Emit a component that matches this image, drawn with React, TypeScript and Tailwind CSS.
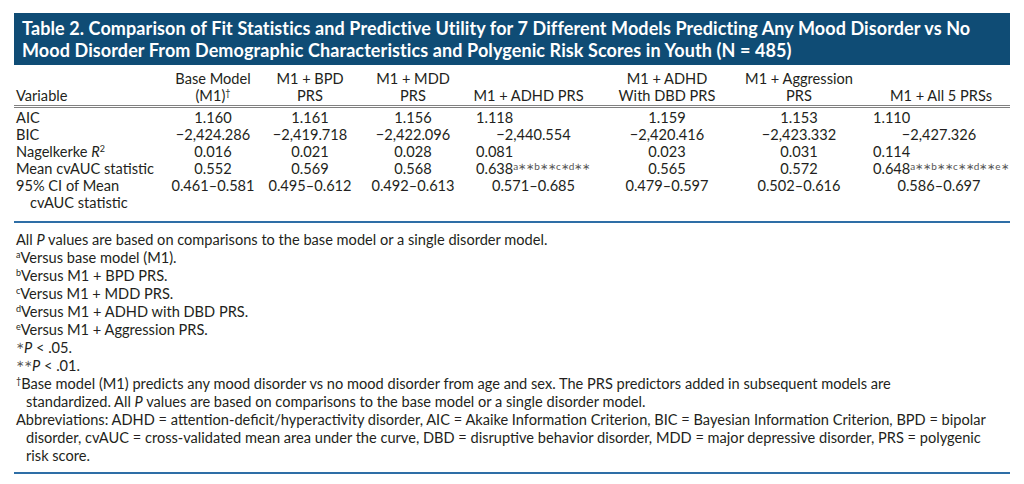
import React from 'react';

const font = { fontFamily: 'Lato, "Noto Sans", sans-serif' };

function Sup({ children }: { children: React.ReactNode }) {
  return <span className="relative -top-[5px] text-[9px] leading-none">{children}</span>;
}

// significance marks in the cvAUC row
function Stars({ children }: { children: React.ReactNode }) {
  return <span className="relative -top-[4px] text-[10px] leading-none text-[#555]">{children}</span>;
}

const cols = 'grid grid-cols-[151px_96px_98px_108px_133px_134px_130px_150px]';

type Cell = { v: React.ReactNode; left?: boolean };

const rows: { label: React.ReactNode; cells: Cell[] }[] = [
  {
    label: 'AIC',
    cells: [
      { v: '1.160' },
      { v: '1.161' },
      { v: '1.156' },
      { v: '1.118', left: true },
      { v: '1.159' },
      { v: '1.153' },
      { v: '1.110', left: true },
    ],
  },
  {
    label: 'BIC',
    cells: [
      { v: '−2,424.286' },
      { v: '−2,419.718' },
      { v: '−2,422.096' },
      { v: '−2,440.554' },
      { v: '−2,420.416' },
      { v: '−2,423.332' },
      { v: '−2,427.326' },
    ],
  },
  {
    label: (
      <>
        Nagelkerke <i>R</i>
        <Sup>2</Sup>
      </>
    ),
    cells: [
      { v: '0.016' },
      { v: '0.021' },
      { v: '0.028' },
      { v: '0.081', left: true },
      { v: '0.023' },
      { v: '0.031' },
      { v: '0.114', left: true },
    ],
  },
  {
    label: 'Mean cvAUC statistic',
    cells: [
      { v: '0.552' },
      { v: '0.569' },
      { v: '0.568' },
      {
        v: (
          <>
            0.638<Stars>a∗∗b∗∗c∗d∗∗</Stars>
          </>
        ),
        left: true,
      },
      { v: '0.565' },
      { v: '0.572' },
      {
        v: (
          <>
            0.648<Stars>a∗∗b∗∗c∗∗d∗∗e∗</Stars>
          </>
        ),
        left: true,
      },
    ],
  },
  {
    label: (
      <>
        95% CI of Mean
        <span className="block pl-[14px]">cvAUC statistic</span>
      </>
    ),
    cells: [
      { v: '0.461–0.581' },
      { v: '0.495–0.612' },
      { v: '0.492–0.613' },
      { v: '0.571–0.685' },
      { v: '0.479–0.597' },
      { v: '0.502–0.616' },
      { v: '0.586–0.697' },
    ],
  },
];

const headers: React.ReactNode[] = [
  <>
    Base Model
    <br />
    (M1)<Sup>†</Sup>
  </>,
  <>
    M1 + BPD
    <br />
    PRS
  </>,
  <>
    M1 + MDD
    <br />
    PRS
  </>,
  <span className="block pr-[10px]">M1 + ADHD PRS</span>,
  <>
    M1 + ADHD
    <br />
    With DBD PRS
  </>,
  <>
    M1 + Aggression
    <br />
    PRS
  </>,
  <span className="block text-right pr-[22px]">M1 + All 5 PRSs</span>,
];

export default function App() {
  return (
    <div className="w-[1024px] h-[484px] bg-white px-[14px] pt-[13px] text-[#231f20]" style={font}>
      <div className="bg-[#0f4c75] text-white font-bold text-[18px] leading-[22px] tracking-[0.1px] px-[8px] py-[4px]">
        <div className="whitespace-nowrap">
          Table 2. Comparison of Fit Statistics and Predictive Utility for 7 Different Models Predicting Any Mood
          Disorder vs No
        </div>
        <div className="whitespace-nowrap">
          Mood Disorder From Demographic Characteristics and Polygenic Risk Scores in Youth (N = 485)
        </div>
      </div>

      <div className="text-[14.6px] leading-[17px]">
        <div className={`${cols} items-end pt-[5px] pb-[1px] border-b-[3px] border-double border-[#808080]`}>
          <div className="pl-[2px]">Variable</div>
          {headers.map((h, i) => (
            <div key={i} className="text-center">
              {h}
            </div>
          ))}
        </div>

        <div className="pt-[1px] pb-[10px] border-b-2 border-[#2e6ea6]">
          {rows.map((r, ri) => (
            <div key={ri} className={`${cols} items-start`}>
              <div className="pl-[2px]">{r.label}</div>
              {r.cells.map((c, ci) => (
                <div
                  key={ci}
                  className={c.left ? 'text-left pl-[9px] whitespace-nowrap' : 'text-center whitespace-nowrap'}
                >
                  {c.v}
                </div>
              ))}
            </div>
          ))}
        </div>

        <div className="pt-[8px] pb-[7px] pl-[2px] leading-[18px] border-b-2 border-[#2e6ea6]">
          <div>
            All <i>P</i> values are based on comparisons to the base model or a single disorder model.
          </div>
          <div>
            <Sup>a</Sup>Versus base model (M1).
          </div>
          <div>
            <Sup>b</Sup>Versus M1 + BPD PRS.
          </div>
          <div>
            <Sup>c</Sup>Versus M1 + MDD PRS.
          </div>
          <div>
            <Sup>d</Sup>Versus M1 + ADHD with DBD PRS.
          </div>
          <div>
            <Sup>e</Sup>Versus M1 + Aggression PRS.
          </div>
          <div>
            <Stars>∗</Stars>
            <i>P</i> &lt; .05.
          </div>
          <div>
            <Stars>∗∗</Stars>
            <i>P</i> &lt; .01.
          </div>
          <div>
            <Sup>†</Sup>Base model (M1) predicts any mood disorder vs no mood disorder from age and sex. The PRS
            predictors added in subsequent models are
          </div>
          <div className="pl-[10px]">
            standardized. All <i>P</i> values are based on comparisons to the base model or a single disorder model.
          </div>
          <div>
            Abbreviations: ADHD = attention-deficit/hyperactivity disorder, AIC = Akaike Information Criterion, BIC =
            Bayesian Information Criterion, BPD = bipolar
          </div>
          <div className="pl-[10px]">
            disorder, cvAUC = cross-validated mean area under the curve, DBD = disruptive behavior disorder, MDD =
            major depressive disorder, PRS = polygenic
          </div>
          <div className="pl-[10px]">risk score.</div>
        </div>
      </div>
    </div>
  );
}
